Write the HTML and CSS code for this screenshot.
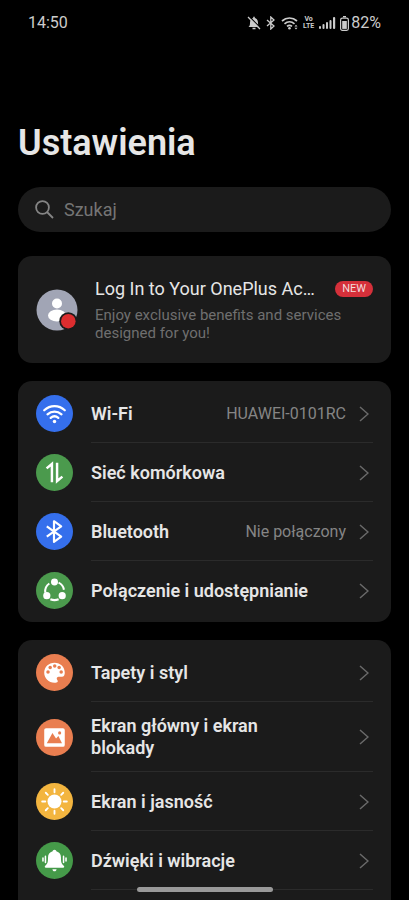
FILE: index.html
```html
<!DOCTYPE html>
<html lang="pl">
<head>
<meta charset="utf-8">
<meta name="viewport" content="width=device-width, initial-scale=1">
<title>Ustawienia</title>
<link rel="stylesheet" href="styles.css">
</head>
<body>
<div class="screen">
  <header class="status">
    <span class="time">14:50</span>
    <div class="indicators">
      <svg width="14" height="14" viewBox="0 0 14 14"><path d="M1.500 11c1.300-1 1.500-2 1.500-4.200C3 4 4.600 2 7 2s4 2 4 4.800c0 2.200.2 3.200 1.500 4.200z" fill="#ccc"/><path d="M7 .800v2M5.500 12.500h3" stroke="#ccc" stroke-width="1.600"/><path d="M2.200 .500 14 12.300" stroke="#000" stroke-width="1.300"/><path d="M1 1l12 12" stroke="#ccc" stroke-width="1.300"/></svg>
      <svg width="10" height="14" viewBox="0 0 10 14"><path d="M1 4l7 6-3.200 3V1L8 4l-7 6" fill="none" stroke="#ccc" stroke-width="1.300"/></svg>
      <svg width="17" height="14" viewBox="0 0 17 14"><g fill="none" stroke="#ccc" stroke-width="1.700"><path d="M1 5c4.500-4 10.500-4 15 0"/><path d="M3.500 7.800c3-2.600 7-2.600 10 0"/><path d="M6 10.300c1.500-1.200 3.500-1.200 5 0"/></g><circle cx="8.500" cy="12.300" r="1.300" fill="#ccc"/><path d="M13.500 10.500h3L15 8.800zM13.500 11.700h3L15 13.400z" fill="#ccc"/></svg>
      <span class="volte"><span>Vo</span><span>LTE</span></span>
      <svg width="17" height="12" viewBox="0 0 17 12" fill="#ccc"><rect y="9" width="2" height="3" rx="1"/><rect x="3.500" y="7" width="2" height="5" rx="1"/><rect x="7" y="5" width="2" height="7" rx="1"/><rect x="10.500" y="3" width="2" height="9" rx="1"/><rect x="14" width="2.200" height="12" rx="1"/></svg>
      <svg class="battery" width="9" height="15" viewBox="0 0 9 15"><path d="M3 .700h3" stroke="#ccc" stroke-width="1.400"/><rect x=".6" y="2.100" width="7.800" height="12.300" rx="1.800" fill="none" stroke="#ccc" stroke-width="1.200"/><rect x="2.200" y="5" width="4.600" height="7.900" fill="#ccc"/></svg>
      <span class="charge">82%</span>
    </div>
  </header>

  <main class="content">
    <h1 class="title">Ustawienia</h1>

    <label class="search">
      <svg width="19" height="19" viewBox="0 0 19 19" fill="none" stroke="#858585" stroke-width="1.800"><circle cx="7.500" cy="7.500" r="6.400"/><path d="M12 12l6 6"/></svg>
      <input class="search-input" type="search" placeholder="Szukaj" aria-label="Szukaj">
    </label>

    <a class="card account" href="#account">
      <svg class="avatar" width="42" height="42" viewBox="0 0 42 42"><circle cx="21" cy="21" r="20.500" fill="#a1a5b5"/><circle cx="21" cy="14.500" r="5" fill="#fff"/><ellipse cx="21" cy="26.500" rx="9" ry="6" fill="#fff"/><circle cx="32.300" cy="32.200" r="9" fill="#1b1b1b"/><circle cx="32.300" cy="32.200" r="7.300" fill="#dc2d2f"/></svg>
      <span class="account-body">
        <span class="account-head"><span class="account-title">Log In to Your OnePlus Ac…</span><span class="tag">NEW</span></span>
        <span class="account-note">Enjoy exclusive benefits and services designed for you!</span>
      </span>
    </a>

    <nav class="card group">
      <a class="row" href="#wifi">
        <svg class="icon" viewBox="0 0 36 36"><circle cx="18" cy="18" r="18" fill="#356fec"/><g fill="none" stroke="#fff" stroke-width="2.200" stroke-linecap="round"><path d="M8 14.800c5.800-5.300 14.200-5.300 20 0"/><path d="M11.200 18.800c4-3.600 9.600-3.600 13.600 0"/><path d="M14.300 22.300c2.200-1.900 5.200-1.900 7.400 0"/></g><circle cx="18" cy="25.800" r="1.700" fill="#fff"/></svg>
        <span class="row-body"><span class="label">Wi-Fi</span><span class="value">HUAWEI-0101RC</span><svg class="chevron" viewBox="0 0 10 16"><path d="M1 1l8 7-8 7"/></svg></span>
      </a>
      <a class="row" href="#mobile">
        <svg class="icon" viewBox="0 0 36 36"><circle cx="18" cy="18" r="18" fill="#4b9a4d"/><path d="M10.300 14l5.200-4.300V27.500M20.500 8.500v17.800l5.200-4.300" fill="none" stroke="#fff" stroke-width="2.400"/></svg>
        <span class="row-body"><span class="label">Sieć komórkowa</span><svg class="chevron" viewBox="0 0 10 16"><path d="M1 1l8 7-8 7"/></svg></span>
      </a>
      <a class="row" href="#bluetooth">
        <svg class="icon" viewBox="0 0 36 36"><circle cx="18" cy="18" r="18" fill="#356fec"/><path d="M10.500 13l14 10-7 5V8l7 5-14 10" fill="none" stroke="#fff" stroke-width="2.100" stroke-linejoin="round"/></svg>
        <span class="row-body"><span class="label">Bluetooth</span><span class="value">Nie połączony</span><svg class="chevron" viewBox="0 0 10 16"><path d="M1 1l8 7-8 7"/></svg></span>
      </a>
      <a class="row" href="#sharing">
        <svg class="icon" viewBox="0 0 36 36"><circle cx="18" cy="18" r="18" fill="#4b9a4d"/><g fill="none" stroke="#fff" stroke-width="2"><path d="M9 20a9.300 9.300 0 0 1 4-8.800"/><path d="M22 10.400a9.300 9.300 0 0 1 5.200 6.900"/><path d="M14 26.500c2.600 1.100 5.400 1.100 8 0"/></g><g fill="#fff"><circle cx="18" cy="9.800" r="3.400"/><circle cx="10.500" cy="23" r="3.500"/><circle cx="25.500" cy="23" r="3.500"/></g></svg>
        <span class="row-body"><span class="label">Połączenie i udostępnianie</span><svg class="chevron" viewBox="0 0 10 16"><path d="M1 1l8 7-8 7"/></svg></span>
      </a>
    </nav>

    <nav class="card group group-open">
      <a class="row" href="#style">
        <svg class="icon" viewBox="0 0 36 36"><circle cx="18" cy="18" r="18" fill="#e97e50"/><path d="M18 8.500c-5.700 0-10 4.200-10 9.700 0 5.300 4.300 9.700 10 9.700 3.200 0 3.800-1.200 2.700-2.700-1.200-1.800 0-3 1.800-3h2.800c1.800 0 2.700-1.800 2.700-4 0-5.500-4.300-9.700-10-9.700z" fill="#fff"/><g fill="#e97e50"><circle cx="11.700" cy="17.500" r="1.700"/><circle cx="13.800" cy="13.200" r="1.700"/><circle cx="18.200" cy="11.600" r="1.700"/><circle cx="22.500" cy="13.200" r="1.700"/><circle cx="24.500" cy="17.500" r="1.700"/></g></svg>
        <span class="row-body"><span class="label">Tapety i styl</span><svg class="chevron" viewBox="0 0 10 16"><path d="M1 1l8 7-8 7"/></svg></span>
      </a>
      <a class="row" href="#home">
        <svg class="icon" viewBox="0 0 36 36"><circle cx="18" cy="18" r="18" fill="#e97e50"/><rect x="8" y="9" width="20" height="18" rx="1.800" fill="#fff"/><path d="M10.500 23.500l5.500-9.800 3.500 5.300 2.300-2.500 3.500 7z" fill="#e97e50"/><circle cx="23" cy="13.500" r="1.500" fill="#e97e50"/></svg>
        <span class="row-body"><span class="label">Ekran główny i ekran blokady</span><svg class="chevron" viewBox="0 0 10 16"><path d="M1 1l8 7-8 7"/></svg></span>
      </a>
      <a class="row" href="#display">
        <svg class="icon" viewBox="0 0 36 36"><circle cx="18" cy="18" r="18" fill="#f3b53f"/><circle cx="18" cy="18" r="6.800" fill="#fff"/><path d="M18 6v3M18 27v3M6 18h3M27 18h3M9.500 9.500l2 2M24.500 24.500l2 2M26.500 9.500l-2 2M11.500 24.500l-2 2" stroke="#fff" stroke-width="1.800" stroke-linecap="round"/></svg>
        <span class="row-body"><span class="label">Ekran i jasność</span><svg class="chevron" viewBox="0 0 10 16"><path d="M1 1l8 7-8 7"/></svg></span>
      </a>
      <a class="row" href="#sound">
        <svg class="icon" viewBox="0 0 36 36"><circle cx="18" cy="18" r="18" fill="#459a49"/><path d="M18 7.500c1.100 0 1.800.7 1.800 1.600 3 .8 4.500 3 4.500 6.100 0 4.500.5 6.300 2.700 7.800.8.600.5 2-.6 2H9.600c-1.100 0-1.400-1.400-.6-2 2.200-1.500 2.700-3.300 2.700-7.800 0-3.100 1.500-5.300 4.500-6.100 0-.9.700-1.600 1.800-1.600zM16 26.500h4c0 1.200-.9 2-2 2s-2-.800-2-2z" fill="#fff"/><path d="M9.200 14v6M26.800 14v6M6.800 15.500v3M29.200 15.500v3" stroke="#fff" stroke-width="1.500" stroke-linecap="round"/></svg>
        <span class="row-body"><span class="label">Dźwięki i wibracje</span><svg class="chevron" viewBox="0 0 10 16"><path d="M1 1l8 7-8 7"/></svg></span>
      </a>
    </nav>
  </main>
  <div class="home-bar"></div>
</div>
</body>
</html>
```
FILE: styles.css
```css
* { box-sizing: border-box; }
body {
  margin: 0;
  background: #000;
  color: #e6e6e6;
  font-family: Roboto, sans-serif;
}
a { color: inherit; text-decoration: none; }
svg { flex: none; }
.screen {
  display: flex;
  flex-direction: column;
  height: 100vh;
  overflow: hidden;
}
.status {
  display: flex;
  justify-content: space-between;
  align-items: center;
  height: 46px;
  padding: 0 28px;
  font-size: 16px;
  line-height: 20px;
  color: #ccc;
}
.indicators { display: flex; align-items: center; gap: 5px; }
.volte {
  display: flex;
  flex-direction: column;
  align-items: center;
  font-size: 7px;
  line-height: 7px;
  font-weight: 700;
}
.battery { margin: 0 -3px 0 -1px; }
.content {
  display: flex;
  flex-direction: column;
  flex: 1;
  padding: 75px 18px 0;
}
.title {
  margin: 0 0 22px;
  font-size: 36px;
  line-height: 44px;
  font-weight: 600;
}
.search {
  display: flex;
  align-items: center;
  gap: 10px;
  flex: none;
  height: 45px;
  margin-bottom: 24px;
  padding: 0 17px;
  border-radius: 23px;
  background: #1b1b1b;
}
.search-input {
  flex: 1;
  min-width: 0;
  padding: 0;
  border: 0;
  outline: 0;
  background: none;
  color: #e6e6e6;
  font: 18px/24px Roboto, sans-serif;
}
.search-input::placeholder { color: #757575; }
.card {
  margin-bottom: 18px;
  border-radius: 14px;
  background: #1b1b1b;
}
.account {
  display: flex;
  align-items: center;
  gap: 17px;
  height: 107px;
  padding: 0 18px;
}
.account-body {
  display: flex;
  flex-direction: column;
  flex: 1;
  min-width: 0;
  gap: 6px;
}
.account-head {
  display: flex;
  align-items: center;
  justify-content: space-between;
}
.account-title {
  font-size: 18px;
  line-height: 22px;
  white-space: nowrap;
}
.tag {
  padding: 0 7px;
  border-radius: 8px;
  background: #d5303a;
  color: #f3dcdc;
  font-size: 11px;
  line-height: 16px;
}
.account-note {
  padding-right: 30px;
  color: #6f6f6f;
  font-size: 15px;
  line-height: 18px;
}
.group { padding: 3px 18px 2px; }
.group-open {
  flex: 1;
  margin-bottom: 0;
  border-radius: 14px 14px 0 0;
}
.row { display: flex; align-items: center; gap: 18px; }
.icon { width: 37px; height: 37px; }
.row-body {
  display: flex;
  align-items: center;
  flex: 1;
  min-height: 59px;
  padding: 13px 4px 12px 0;
  border-bottom: 1px solid #2b2b2b;
}
.group:not(.group-open) .row:last-child .row-body { border-color: transparent; }
.label {
  flex: 1;
  padding-right: 28px;
  font-size: 18px;
  line-height: 22px;
  font-weight: 600;
}
.value {
  color: #858585;
  font-size: 16px;
  white-space: nowrap;
}
.chevron {
  width: 10px;
  height: 16px;
  margin-left: 13px;
  fill: none;
  stroke: #6a6a6a;
  stroke-width: 1.5;
}
.home-bar {
  position: fixed;
  left: 50%;
  bottom: 8px;
  width: 136px;
  height: 5px;
  border-radius: 3px;
  background: #999;
  transform: translateX(-50%);
}
```
